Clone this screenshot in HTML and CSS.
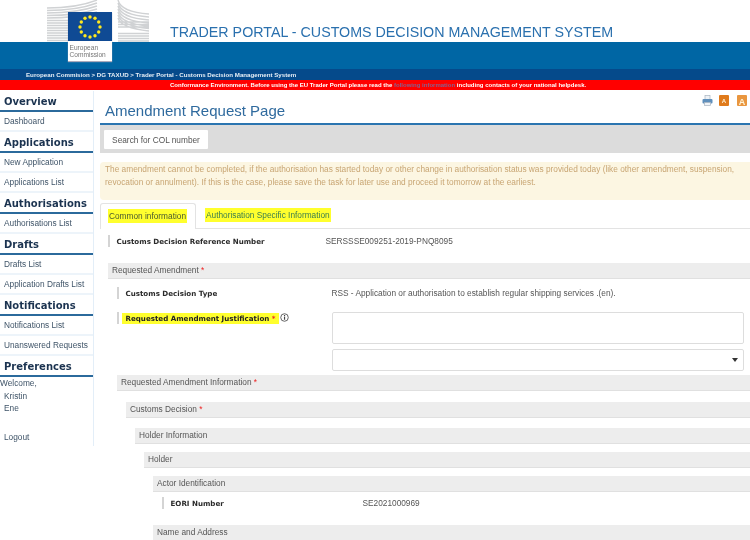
FILE: index.html
```html
<!DOCTYPE html>
<html lang="en">
<head>
<meta charset="utf-8">
<title>Amendment Request Page</title>
<link rel="stylesheet" href="styles.css">
</head>
<body>
<header class="top">
  <div class="logo">
    <svg class="building" viewBox="0 0 102 42" width="102" height="42">
      <g stroke="#d0d2d4" stroke-width="1.4" fill="none">
        <path d="M0 8 Q30 8 50 0M0 10.5 Q30 10.5 50 3M0 13 Q30 13 50 6M0 15.5 Q30 15.5 50 9M0 18 Q30 18 50 12M0 20.5 H50M0 23 H50M0 25.5 H50M0 28 H50M0 30.5 H50M0 33 H50M0 35.5 H50M0 38 H50M0 40.5 H50"/>
        <path d="M71 0 Q74 12 102 14M71 3 Q74 15 102 17M71 6 Q74 18 102 20M71 9 Q74 21 102 23M71 12 Q74 24 102 26M71 15 Q74 26 102 28.5M71 18 Q74 28 102 31M71 22 H102M71 24.5 H102M71 27 H102M71 33.5 H102M71 36 H102M71 38.5 H102M71 41 H102"/>
      </g>
    </svg>
    <div class="flag">
      <svg viewBox="0 0 44 29" width="44" height="29">
        <rect width="44" height="29" fill="#0f4a94"/>
        <g fill="#ffe81e">
          <circle cx="22" cy="5" r="1.7"/><circle cx="27" cy="6.3" r="1.7"/><circle cx="30.7" cy="10" r="1.7"/>
          <circle cx="32" cy="15" r="1.7"/><circle cx="30.7" cy="20" r="1.7"/><circle cx="27" cy="23.7" r="1.7"/>
          <circle cx="22" cy="25" r="1.7"/><circle cx="17" cy="23.7" r="1.7"/><circle cx="13.3" cy="20" r="1.7"/>
          <circle cx="12" cy="15" r="1.7"/><circle cx="13.3" cy="10" r="1.7"/><circle cx="17" cy="6.3" r="1.7"/>
        </g>
      </svg>
      <div class="flag-text">European<br>Commission</div>
    </div>
  </div>
  <div class="brand"><h1 class="brand-title">TRADER PORTAL - CUSTOMS DECISION MANAGEMENT SYSTEM</h1></div>
  <div class="band"></div>
  <div class="crumbs">European Commision &gt; DG TAXUD &gt; Trader Portal - Customs Decision Management System</div>
  <div class="notice">Conformance Environment. Before using the EU Trader Portal please read the <a class="notice-link">following information</a> including contacts of your national helpdesk.</div>
</header>
<div class="layout">
  <nav class="side">
    <h2 class="side-head">Overview</h2>
    <a class="side-item">Dashboard</a>
    <h2 class="side-head">Applications</h2>
    <a class="side-item">New Application</a>
    <a class="side-item">Applications List</a>
    <h2 class="side-head">Authorisations</h2>
    <a class="side-item">Authorisations List</a>
    <h2 class="side-head">Drafts</h2>
    <a class="side-item">Drafts List</a>
    <a class="side-item">Application Drafts List</a>
    <h2 class="side-head">Notifications</h2>
    <a class="side-item">Notifications List</a>
    <a class="side-item">Unanswered Requests</a>
    <h2 class="side-head">Preferences</h2>
    <div class="welcome">Welcome,</div>
    <div class="user">Kristin</div>
    <div class="user">Ene</div>
    <a class="logout">Logout</a>
  </nav>
  <main class="main">
    <div class="title-row">
      <h1 class="page-title">Amendment Request Page</h1>
      <div class="tools">
        <svg class="tool-print" viewBox="0 0 11 11" width="11" height="11"><rect x="3" y="0.5" width="5" height="4" fill="#eef2f6" stroke="#a8b4c0" stroke-width=".7"/><rect x="0.5" y="4" width="10" height="4.5" rx="1" fill="#5f8fbc"/><rect x="2.5" y="7.5" width="6" height="3" fill="#f0f3f7" stroke="#a8b4c0" stroke-width=".7"/></svg>
        <svg viewBox="0 0 10 11" width="10" height="11"><rect width="10" height="11" rx="1" fill="#e07b1c"/><text class="a-small" x="5" y="8">A</text></svg>
        <svg viewBox="0 0 10 11" width="10" height="11"><rect width="10" height="11" rx="1" fill="#e9963f"/><text class="a-large" x="5" y="9.5">A</text></svg>
      </div>
    </div>
    <div class="toolbar"><button class="tool-btn">Search for COL number</button></div>
    <div class="alert">The amendment cannot be completed, if the authorisation has started today or other change in authorisation status was provided today (like other amendment, suspension, revocation or annulment). If this is the case, please save the task for later use and proceed it tomorrow at the earliest.</div>
    <div class="tabs">
      <div class="tab tab-active"><span class="hl">Common information</span></div>
      <div class="tab"><span class="hl tab-link">Authorisation Specific Information</span></div>
    </div>
    <div class="content">
      <div class="row row-ref"><div class="label label-ref">Customs Decision Reference Number</div><div class="value">SERSSSE009251-2019-PNQ8095</div></div>
      <div class="sec sec-first">Requested Amendment <span class="req">*</span></div>
      <div class="nest">
        <div class="row row-type"><div class="label label-type">Customs Decision Type</div><div class="value">RSS - Application or authorisation to establish regular shipping services .(en).</div></div>
        <div class="row-just">
          <div class="just-label"><div class="label"><span class="hl hl-label">Requested Amendment Justification <span class="req">*</span></span></div>
            <svg class="info" viewBox="0 0 10 10" width="9" height="9"><circle cx="5" cy="5" r="4.2" fill="none" stroke="#555"/><rect x="4.4" y="4" width="1.3" height="3.5" fill="#444"/><rect x="4.4" y="2.2" width="1.3" height="1.2" fill="#444"/></svg>
          </div>
          <div class="inputs">
            <div class="textarea"></div>
            <div class="select"><span class="caret"></span></div>
          </div>
        </div>
        <div class="sec sec-info">Requested Amendment Information <span class="req">*</span></div>
        <div class="nest">
          <div class="sec sec-decision">Customs Decision <span class="req">*</span></div>
          <div class="nest">
            <div class="sec">Holder Information</div>
            <div class="nest">
              <div class="sec sec-tight">Holder</div>
              <div class="nest">
                <div class="sec sec-tight">Actor Identification</div>
                <div class="row row-eori"><div class="label label-eori">EORI Number</div><div class="value">SE2021000969</div></div>
                <div class="sec sec-name">Name and Address</div>
              </div>
            </div>
          </div>
        </div>
      </div>
    </div>
  </main>
</div>
</body>
</html>
```

FILE: styles.css
```css
html, body { margin: 0; padding: 0; }
body {
  width: 750px;
  height: 540px;
  overflow: hidden;
  background: #fff;
  font-family: "Liberation Sans", Arial, sans-serif;
  font-size: 8.3px;
  color: #444;
  filter: blur(0.3px);
}
.top { position: relative; }
.logo { position: absolute; left: 47px; top: 0; width: 102px; height: 62px; z-index: 2; }
.building { display: block; }
.flag { position: absolute; left: 20.5px; top: 12px; width: 44px; height: 49px; background: #fff; box-shadow: 0 1px 1px #aab; }
.flag svg { display: block; margin: 0 auto; }
.flag-text { font-size: 6.6px; line-height: 7px; color: #777; padding: 3px 0 0 2px; }
.brand { height: 42px; box-sizing: border-box; padding: 24px 0 0 170px; }
.brand-title { margin: 0; font-size: 14.27px; font-weight: normal; line-height: 17px; color: #2a70ae; white-space: nowrap; }
.band { height: 27px; background: #0066a4; }
.crumbs { height: 11px; line-height: 11px; background: #054a8b; color: #e6eef6; padding-left: 26px; font-size: 6.18px; font-weight: bold; white-space: nowrap; }
.notice { height: 10px; line-height: 10px; background: #f00; color: #fff; padding-left: 170px; font-size: 6.02px; font-weight: bold; white-space: nowrap; }
.notice-link { color: #85608f; }
.layout { display: flex; align-items: flex-start; }
.side { width: 93px; height: 355px; flex: none; border-right: 1px solid #e3eef8; margin-top: 1px; }
.side-head { margin: 0; height: 19px; line-height: 22px; border-bottom: 2px solid #2b6a9c; padding-left: 4px; font-family: "DejaVu Sans", sans-serif; font-size: 10px; font-weight: bold; color: #1b3350; white-space: nowrap; }
.side-item { display: block; height: 18px; line-height: 19px; padding-left: 4px; border-bottom: 2px solid #edf4fa; color: #3f5468; white-space: nowrap; }
.welcome { line-height: 12.5px; color: #3f5468; }
.user { line-height: 12.5px; padding-left: 4px; color: #3f5468; }
.logout { display: block; padding-left: 4px; margin-top: 16px; line-height: 12.5px; color: #3f5468; }
.main { flex: 1; min-width: 0; padding-left: 6px; }
.title-row { height: 35px; border-bottom: 2px solid #2b75b0; box-sizing: border-box; display: flex; justify-content: space-between; }
.page-title { margin: 0; padding: 11px 0 0 5px; font-size: 15px; line-height: 20px; font-weight: normal; color: #2f6a9e; white-space: nowrap; }
.tools { display: flex; gap: 8px; align-items: flex-start; padding: 5px 3px 0 0; }
.tool-print { margin-right: -2px; }
.a-small { font: bold 6px "Liberation Sans", sans-serif; fill: #fff3d8; text-anchor: middle; }
.a-large { font: bold 9px "Liberation Sans", sans-serif; fill: #fff3d8; text-anchor: middle; }
.toolbar { height: 28px; background: #dcdcdc; box-sizing: border-box; padding: 5px 0 0 4px; }
.tool-btn { display: block; width: 104px; height: 19px; padding: 0; border: 0; border-radius: 1px; background: #fff; color: #555; font-family: "Liberation Sans", sans-serif; font-size: 8.3px; }
.alert { margin-top: 9px; height: 38px; box-sizing: border-box; padding: 1px 5px 0; border-radius: 4px 0 0 4px; background: #fcf6e2; color: #c8a573; line-height: 12.5px; }
.tabs { display: flex; margin-top: 3px; height: 26px; border-bottom: 1px solid #e3e3e3; box-sizing: border-box; }
.tab { height: 26px; box-sizing: border-box; padding: 7px 9px 0; line-height: 11px; white-space: nowrap; }
.tab-active { background: #fff; border: 1px solid #e3e3e3; border-bottom: 0; border-radius: 3px 3px 0 0; padding-left: 7px; padding-right: 8px; }
.hl { background: #ffff2e; color: #4a5a30; padding: 2px 1px; }
.tab-link { color: #3a7d50; }
.hl-label { color: #222; padding: 1px 3px 1px 4px; margin-left: -4px; }
.req { color: #e22; }
.content { padding-left: 8px; }
.row { display: flex; align-items: center; }
.label { font-family: "DejaVu Sans", sans-serif; font-size: 7.1px; font-weight: bold; color: #2a2a2a; white-space: nowrap; line-height: 11px; padding-top: 1px; border-left: 2px solid #d4d4d4; padding-left: 6.5px; }
.value { color: #555; white-space: nowrap; }
.row-ref { margin-top: 6px; }
.label-ref { width: 209px; flex: none; }
.sec { background: #ededed; border-bottom: 1px solid #e0e0e0; height: 16px; box-sizing: border-box; line-height: 15px; padding-left: 4px; margin-top: 10px; color: #555; white-space: nowrap; }
.sec-first { margin-top: 16px; }
.sec-info { margin-top: 4px; }
.sec-decision { margin-top: 11px; }
.sec-tight { margin-top: 8px; }
.sec-name { margin-top: 16px; }
.nest { margin-left: 9px; }
.row-type { margin-top: 8px; }
.label-type { width: 206px; flex: none; }
.row-just { display: flex; margin-top: 13px; }
.just-label { width: 215px; flex: none; display: flex; align-items: flex-start; gap: 1px; }
.info { flex: none; margin-top: 1px; }
.inputs { flex: 1; margin-right: 6px; display: flex; flex-direction: column; gap: 5px; }
.textarea { height: 32px; box-sizing: border-box; border: 1px solid #ddd; border-radius: 2px; }
.select { position: relative; height: 22px; box-sizing: border-box; border: 1px solid #ddd; border-radius: 2px; }
.caret { position: absolute; right: 5px; top: 8px; border: 3px solid transparent; border-top: 4px solid #333; border-bottom: 0; }
.row-eori { margin-top: 5px; margin-left: 9px; }
.label-eori { width: 192px; flex: none; }
```
